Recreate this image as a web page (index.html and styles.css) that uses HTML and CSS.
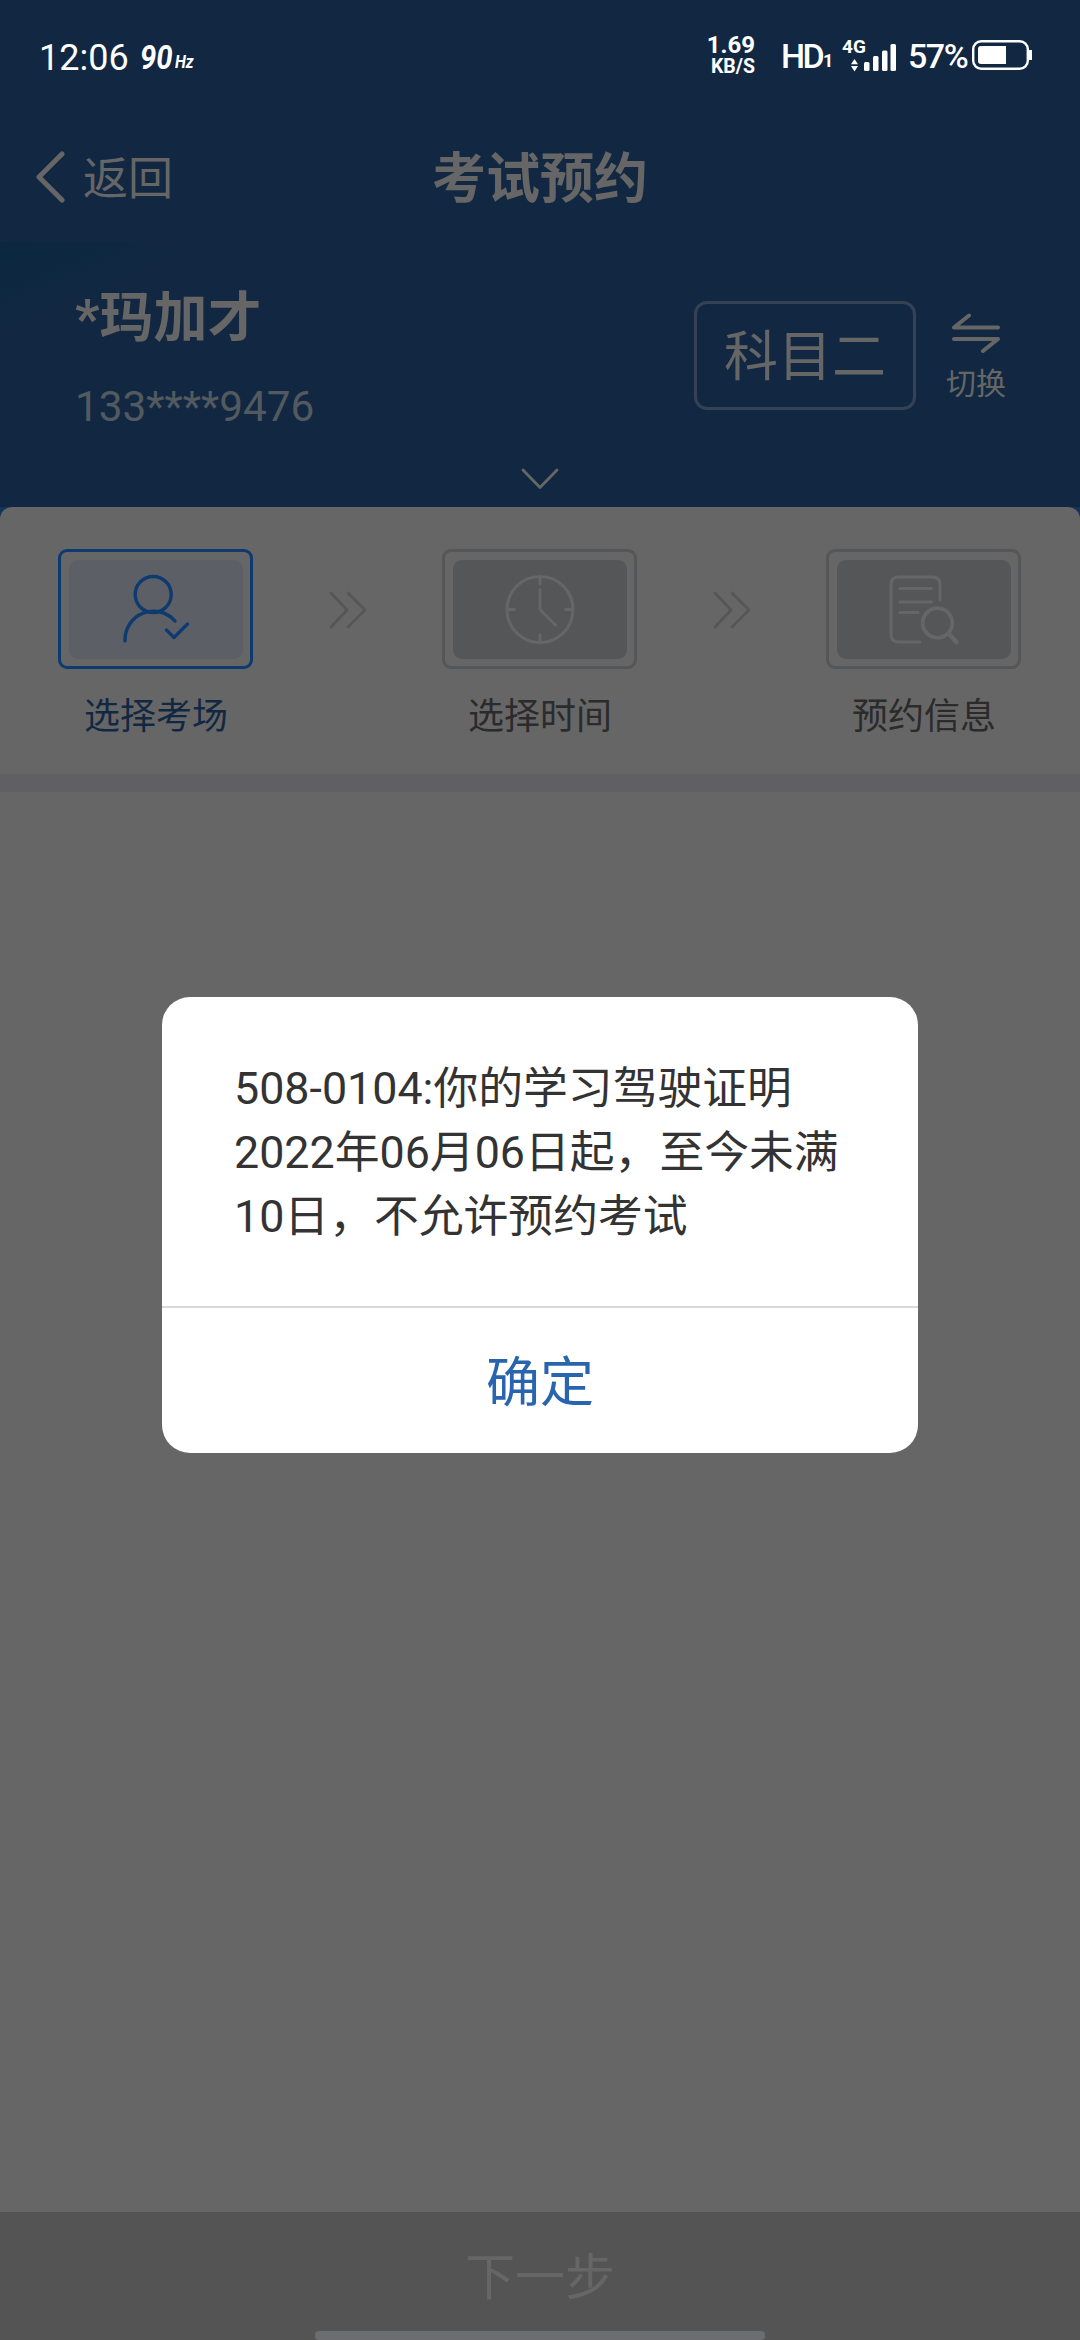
FILE: index.html
```html
<!DOCTYPE html>
<html lang="zh-CN">
<head>
<meta charset="utf-8">
<title>考试预约</title>
<link rel="stylesheet" href="styles.css">
</head>
<body>
<div class="screen">
  <header class="top">
    <div class="status">
      <span class="clock">12:06</span>
      <span class="rate">90</span><span class="rate-unit">Hz</span>
      <span class="speed"><b>1.69</b><i>KB/S</i></span>
      <span class="hd">HD</span><span class="hd-sim">1</span>
      <span class="signal">
        <span class="net">4G</span>
        <svg class="bars" width="54" height="34" viewBox="842 39 54 34" fill="#fff"><path d="M850 64.200L853.500 59L857 64.200ZM850 66L857 66L853.500 71.500Z"/><rect x="863" y="62" width="5.500" height="9" rx="1.500"/><rect x="872" y="56" width="5.500" height="15" rx="1.500"/><rect x="881" y="50.500" width="5.500" height="20.500" rx="1.500"/><rect x="889.500" y="44" width="5.500" height="27" rx="1.500"/></svg>
      </span>
      <span class="percent">57%</span>
      <svg class="battery" width="60" height="30" viewBox="0 0 60 30"><rect x="1.200" y="1.200" width="54.600" height="27.600" rx="8" fill="none" stroke="#fff" stroke-width="2.400"/><path d="M9 6H34V24H9Q6 24 6 21V9Q6 6 9 6Z" fill="#fff"/><rect x="57" y="10" width="3" height="10" fill="#fff"/></svg>
    </div>
    <nav class="nav">
      <div class="back"><svg width="29" height="52" viewBox="0 0 29 52"><path d="M26 3L3 26L26 49" fill="none" stroke="#666" stroke-width="5" stroke-linecap="round" stroke-linejoin="round"/></svg><span>返回</span></div>
      <h1 class="title">考试预约</h1>
      <div></div>
    </nav>
    <section class="profile">
      <div class="person"><div class="name">*玛加才</div><div class="phone">133****9476</div></div>
      <div class="subject">科目二</div>
      <div class="switch"><svg width="50" height="40" viewBox="0 0 50 40"><path d="M18 2.500L3 14.500H47M3 26H47L32 38" fill="none" stroke="#666" stroke-width="4" stroke-linecap="round" stroke-linejoin="round"/></svg><span>切换</span></div>
    </section>
    <svg class="expand" width="40" height="22" viewBox="0 0 40 22"><path d="M3 2L20 19.500L37 2" fill="none" stroke="#666" stroke-width="2.800" stroke-linecap="round" stroke-linejoin="round"/></svg>
  </header>
  <div class="sheet">
  <section class="steps">
    <div class="step active">
      <div class="frame"><svg width="174" height="99" viewBox="68.500 559.500 174 99"><g fill="none" stroke="#0e3a6f" stroke-width="3.400" stroke-linecap="round" stroke-linejoin="round"><circle cx="152.700" cy="594" r="18"/><path d="M124.500 640.500V640A28.500 28.500 0 0 1 174.500 620.500M166 629.500L173.500 637L187 623.500"/></g></svg></div>
      <span>选择考场</span>
    </div>
    <svg class="arrows" width="40" height="40" viewBox="0 0 40 40"><path d="M3 3L19 20L3 37M20 3L37 20L20 37" fill="none" stroke="#545658" stroke-width="2.800" stroke-linecap="round" stroke-linejoin="round"/></svg>
    <div class="step">
      <div class="frame"><svg width="174" height="99" viewBox="452.500 559.500 174 99"><g fill="none" stroke="#666" stroke-width="3" stroke-linecap="round" stroke-linejoin="round"><circle cx="539.500" cy="609" r="33"/><path d="M539.500 577V583.500M539.500 634.500V641M507 609H514M565 609H572M539.500 589V609L555 624.500"/></g></svg></div>
      <span>选择时间</span>
    </div>
    <svg class="arrows" width="40" height="40" viewBox="0 0 40 40"><path d="M3 3L19 20L3 37M20 3L37 20L20 37" fill="none" stroke="#545658" stroke-width="2.800" stroke-linecap="round" stroke-linejoin="round"/></svg>
    <div class="step">
      <div class="frame"><svg width="174" height="99" viewBox="836.500 559.500 174 99"><g fill="none" stroke="#666" stroke-width="3" stroke-linecap="round"><path d="M939.500 599.500V584Q939.500 576.500 932 576.500H898Q890.500 576.500 890.500 584V634Q890.500 641.500 898 641.500H919.500M899.500 588H931M899.500 601.500H931M899.500 612H917.500"/><circle cx="937" cy="622.500" r="14.800" stroke-width="3.800"/><path d="M948.500 633.500L956 641.500" stroke-width="4.500"/></g></svg></div>
      <span>预约信息</span>
    </div>
  </section>
  </div>
  <main class="content"></main>
  <footer class="next"><span>下一步</span><div class="gesture"></div></footer>
</div>
<div class="overlay">
  <div class="dialog" role="dialog">
    <p class="message">508-0104:你的学习驾驶证明<br>2022年06月06日起，至今未满<br>10日，不允许预约考试</p>
    <button class="confirm">确定</button>
  </div>
</div>
</body>
</html>
```
FILE: styles.css
```css
* { box-sizing: border-box; }
body { margin: 0; font-family: Roboto, "Noto Sans CJK SC", sans-serif; background: #666; color: #666; }
svg { display: block; flex: none; }
.screen { width: 1080px; height: 2340px; display: flex; flex-direction: column; background: #666; }
.top { height: 507px; flex: none; background: #122842; display: flex; flex-direction: column; }

.status { height: 114px; flex: none; display: flex; color: #fff; white-space: nowrap; line-height: 1; padding: 0 48px 0 39px; align-items: flex-start; }
.clock { font-size: 36px; width: 101px; margin-top: 40px; }
.rate { font-size: 34px; font-weight: 700; font-style: italic; width: 35px; transform: scaleX(.86); transform-origin: left; margin-top: 40px; }
.rate-unit { font-size: 18px; font-weight: 700; font-style: italic; width: 22px; transform: scaleX(.88); transform-origin: left; margin-top: 53px; }
.speed { margin-left: auto; width: 50px; margin-top: 33px; text-align: right; display: flex; flex-direction: column; align-items: flex-end; }
.speed b { font-size: 24px; font-weight: 700; line-height: 24px; }
.speed i { font-size: 19.500px; font-weight: 700; font-style: normal; line-height: 20px; }
.hd { font-size: 34px; font-weight: 500; margin: 39px 0 0 26px; width: 42px; letter-spacing: -2.500px; }
.hd-sim { font-size: 18px; font-weight: 700; width: 20px; margin-top: 52px; }
.signal { position: relative; width: 54px; height: 34px; margin-top: 39px; }
.net { position: absolute; left: -1px; top: -2px; font-size: 19px; font-weight: 700; }
.percent { font-size: 34px; font-weight: 500; width: 64px; margin: 39px 0 0 11px; letter-spacing: -1.500px; }
.battery { margin-top: 40px; }

.nav { height: 128px; flex: none; display: grid; grid-template-columns: 1fr auto 1fr; align-items: center; padding-bottom: 2px; }
.back { display: flex; align-items: center; padding-left: 36px; gap: 18px; font-size: 45px; }
.back span { padding-bottom: 3px; }
.title { margin: 0; padding-bottom: 6px; font-size: 54px; font-weight: 700; }

.profile { height: 217px; flex: none; display: flex; align-items: flex-start; padding: 36px 73px 0 75px; background: linear-gradient(157deg, #0b2740 0, #122842 95px); }
.person { flex: 1; }
.name { font-size: 54px; font-weight: 700; line-height: 82px; }
.phone { font-size: 42.300px; line-height: 48px; color: #525a60; margin-top: 23px; }
.subject { width: 222px; height: 109px; margin-top: 23px; border: 3px solid #354254; border-radius: 13px; font-size: 54px; line-height: 108px; text-align: center; }
.switch { width: 62px; margin: 35px 0 0 29px; display: flex; flex-direction: column; align-items: center; font-size: 30px; line-height: 36px; gap: 13px; }
.expand { margin: 9px auto 0; }

.sheet { flex: none; background: #14335a; }
.steps { height: 285px; display: flex; align-items: flex-start; justify-content: space-between; padding: 42px 59px 0 58px; border-bottom: 18px solid #606062; background: #666; border-radius: 12px 12px 0 0; }
.step { width: 195px; display: flex; flex-direction: column; align-items: center; color: #2b2b2b; font-size: 36px; line-height: 52px; gap: 22px; }
.step span { padding-left: 1px; }
.frame { width: 195px; height: 120px; border: 3px solid #545658; border-radius: 9px; display: flex; align-items: center; justify-content: center; }
.frame svg { background: #545658; border-radius: 9px; }
.active { color: #122842; }
.active .frame { border-color: #0e3a6f; }
.active .frame svg { background: #5c6066; }
.arrows { margin-top: 41px; }

.content { flex: 1; }
.next { height: 128px; background: #545454; display: flex; flex-direction: column; align-items: center; justify-content: space-between; font-size: 50px; line-height: 133px; }
.next span { height: 119px; }
.gesture { width: 450px; height: 9px; border-radius: 4px; background: #6c6d70; }

.overlay { position: absolute; inset: 0 auto auto 0; width: 1080px; height: 2340px; padding-top: 997px; display: flex; align-items: flex-start; justify-content: center; }
.dialog { width: 756px; height: 456px; border-radius: 28px; background: #fff; overflow: hidden; display: flex; flex-direction: column; }
.message { margin: 0; height: 309px; padding: 60px 0 0 72px; font-size: 44.800px; line-height: 64px; color: #333; white-space: nowrap; }
.confirm { flex: 1; border: 0; border-top: 2px solid #d9d9d9; background: none; color: #2965ae; font: inherit; font-size: 54px; padding: 0 0 4px; }
```
